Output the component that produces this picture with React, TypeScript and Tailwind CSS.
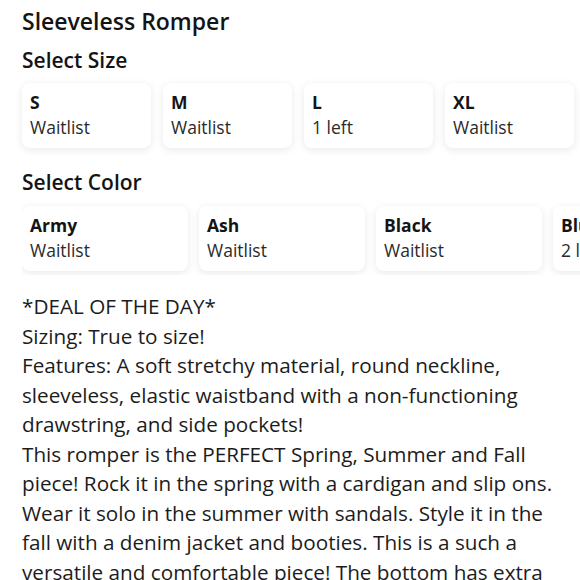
import React from "react";

const sizes = [
  { name: "S", status: "Waitlist" },
  { name: "M", status: "Waitlist" },
  { name: "L", status: "1 left" },
  { name: "XL", status: "Waitlist" },
];

const colors = [
  { name: "Army", status: "Waitlist" },
  { name: "Ash", status: "Waitlist" },
  { name: "Black", status: "Waitlist" },
  { name: "Blue", status: "2 left" },
];

const lines = [
  "*DEAL OF THE DAY*",
  "Sizing: True to size!",
  "Features: A soft stretchy material, round neckline,",
  "sleeveless, elastic waistband with a non-functioning",
  "drawstring, and side pockets!",
  "This romper is the PERFECT Spring, Summer and Fall",
  "piece! Rock it in the spring with a cardigan and slip ons.",
  "Wear it solo in the summer with sandals. Style it in the",
  "fall with a denim jacket and booties. This is a such a",
  "versatile and comfortable piece! The bottom has extra",
];

function Card({ name, status, w }: { name: string; status: string; w: string }) {
  return (
    <div
      className={`${w} shrink-0 rounded-[8px] bg-white shadow-[0_2px_8px_rgba(0,0,0,0.09)] px-[8px] pt-[8px] pb-[9px]`}
    >
      <div className="text-[17.5px] font-bold leading-[22px] text-[#141414]">{name}</div>
      <div className="mt-[2px] text-[17.5px] leading-[24px] text-[#2a2a2a]">{status}</div>
    </div>
  );
}

export default function App() {
  return (
    <div
      className="w-[580px] h-[580px] overflow-hidden bg-white text-[#1c1c1c]"
      style={{ fontFamily: "'Open Sans', 'Noto Sans', sans-serif" }}
    >
      <div className="pl-[22px] pt-[6px]">
        <h1 className="text-[23px] font-semibold leading-[30px] text-[#141414]">Sleeveless Romper</h1>
        <h2 className="mt-[10px] text-[21px] font-semibold leading-[28px] text-[#141414]">Select Size</h2>
        <div className="mt-[9px] flex gap-[12px] pr-[9px] pb-[4px]">
          {sizes.map((s) => (
            <Card key={s.name} name={s.name} status={s.status} w="w-[129px]" />
          ))}
        </div>
        <h2 className="mt-[16px] text-[21px] font-semibold leading-[28px] text-[#141414]">Select Color</h2>
        <div className="mt-[6px] flex gap-[11px] overflow-hidden py-[4px]">
          {colors.map((c) => (
            <Card key={c.name} name={c.name} status={c.status} w="w-[166px]" />
          ))}
        </div>
        <div className="mt-[17px] text-[20.7px] leading-[29.5px] text-[#1c1c1c]">
          {lines.map((l, i) => (
            <div key={i} className="whitespace-nowrap">
              {l}
            </div>
          ))}
        </div>
      </div>
    </div>
  );
}
